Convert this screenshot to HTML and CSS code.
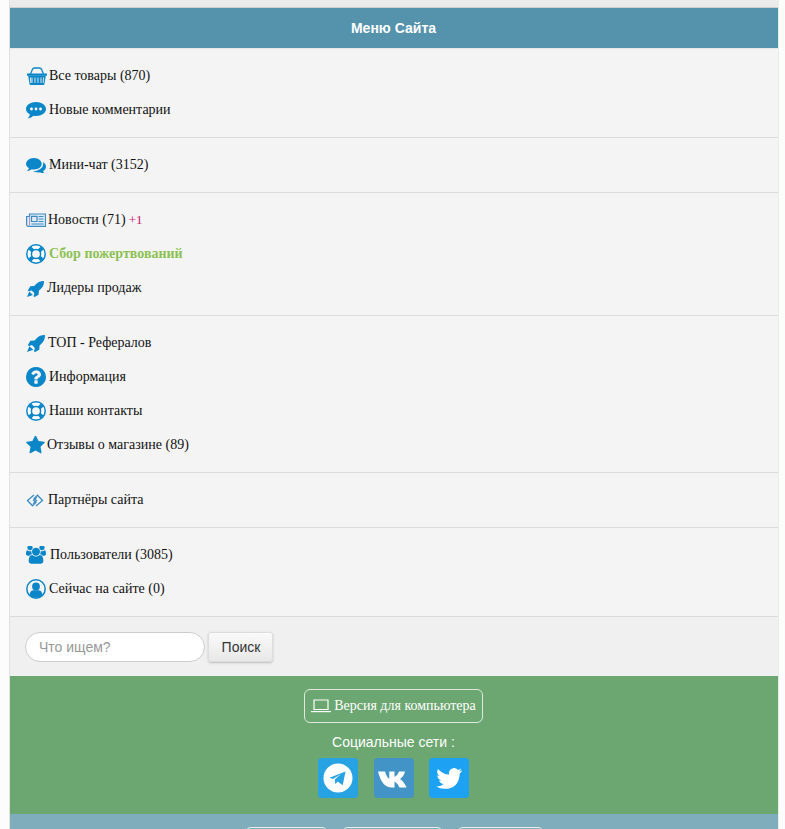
FILE: index.html
```html
<!DOCTYPE html>
<html lang="ru">
<head>
<meta charset="utf-8">
<title>Меню Сайта</title>
<link rel="stylesheet" href="styles.css">
</head>
<body>
<div class="page">
  <div class="panel">
    <div class="top-gap"></div>
    <h2 class="title">Меню Сайта</h2>
    <ul class="group">
      <li class="item"><svg class="ico i-basket" viewBox="0 0 20 18"><path d="M3.500 7 5.500 2.200Q6 1 7.500 1h5q1.500 0 2 1.200L16.500 7" fill="none" stroke="#0b86c9" stroke-width="1.300"/><path d="M0 6.500h20v2.200H0z" fill="#0b86c9"/><path d="M1.200 8.500h17.600l-1.300 8.500q-.2 1-1.200 1H3.700q-1 0-1.200-1z" fill="#0b86c9"/><path d="M5 10.500v5.500M8 10.500v5.500M11 10.500v5.500M14 10.500v5.500M16.500 10.500l-.3 5.500M3.500 10.500l.3 5.500" stroke="#f5f5f5" stroke-width=".9"/></svg><a>Все товары (870)</a></li>
      <li class="item"><svg class="ico i-comment" viewBox="0 0 20 17"><path d="M10 0c5.500 0 10 3 10 7s-4.500 7-10 7q-1.300 0-2.500-.3Q5.500 16 1.800 16.500 4 14.500 3.800 12.300 0 10.300 0 7c0-4 4.500-7 10-7z" fill="#0b86c9"/><circle cx="5.500" cy="7" r="1.400" fill="#fff"/><circle cx="10" cy="7" r="1.400" fill="#fff"/><circle cx="14.500" cy="7" r="1.400" fill="#fff"/></svg><a>Новые комментарии</a></li>
    </ul>
    <ul class="group">
      <li class="item"><svg class="ico i-comments" viewBox="0 250 1792 1340"><path d="M1408 768q0 139-94 257t-256.500 186.500-353.500 68.500q-86 0-176-16-124 88-278 128-36 9-86 16h-3q-11 0-20.500-8t-11.500-21q-1-3-1-6.500t.5-6.500 2-6l2.500-5 3.500-5.500 4-5 4.500-5 4-4.500q5-6 23-25t26-29.500 22.500-29 25-38.500 20.500-44q-124-72-195-177t-71-224q0-139 94-257t256.500-186.500 353.500-68.500 353.500 68.500 256.500 186.500 94 257zm384 256q0 120-71 224.500t-195 176.500q10 24 20.500 44t25 38.500 22.500 29 26 29.500 23 25q1 1 4 4.500t4.500 5 4 5 3.500 5.500l2.500 5 2 6 .5 6.500-1 6.500q-3 14-13 22t-22 7q-50-7-86-16-154-40-278-128-90 16-176 16-271 0-472-132 58 4 88 4 161 0 309-45t264-129q125-92 192-212t67-254q0-77-23-152 129 71 204 178t75 230z" fill="#0b86c9"/></svg><a>Мини-чат (3152)</a></li>
    </ul>
    <ul class="group">
      <li class="item"><svg class="ico i-news" viewBox="0 0 20 14"><path d="M3.500 1h16v12.300H2.200Q.6 13.300.6 11.800V3.500h2.900z" fill="#dfeaf3" stroke="#3c8cc4" stroke-width="1.200"/><path d="M3.500 3.500v9" stroke="#c58cc4" stroke-width="1"/><path d="M5.500 3.300h5.500v5.200H5.500z" fill="none" stroke="#3c8cc4" stroke-width="1.200"/><path d="M12.500 3.500h5M12.500 6h5M12.500 8.500h5M5.500 11h12" stroke="#3c8cc4" stroke-width="1.100"/></svg><a>Новости (71)</a> <span class="plus">+1</span></li>
      <li class="item"><svg class="ico i-ring" viewBox="0 0 20 20"><circle cx="10" cy="10" r="9.200" fill="#fff" stroke="#0b86c9" stroke-width="1.500"/><circle cx="10" cy="10" r="4.600" fill="#f5f5f5" stroke="#0b86c9" stroke-width="1.500"/><path d="M3.800 3.800l3 3M16.200 3.800l-3 3M3.800 16.200l3-3M16.200 16.200l-3-3" stroke="#0b86c9" stroke-width="4"/></svg><a class="bold">Сбор пожертвований</a></li>
      <li class="item"><svg class="ico i-rocket" viewBox="0 0 1728 1728"><path transform="translate(0 -32)" d="M1728 160q0 249-75.500 430.500t-253.500 360.500q-81 80-195 176l-20 379q-2 16-16 26l-384 224q-7 4-16 4-12 0-23-9l-64-64q-13-14-8-32l85-276-281-281-276 85q-3 1-9 1-14 0-23-9l-64-64q-17-19-5-39l224-384q10-14 26-16l379-20q96-114 176-195 188-187 358-258t431-71q14 0 24 9.500t10 22.500z" fill="#0b86c9"/><path d="M230 1180 600 1520 0 1728z" fill="#0b86c9"/></svg><a>Лидеры продаж</a></li>
    </ul>
    <ul class="group">
      <li class="item"><svg class="ico i-rocket2" viewBox="0 0 1728 1728"><path transform="translate(0 -32)" d="M1728 160q0 249-75.500 430.500t-253.500 360.500q-81 80-195 176l-20 379q-2 16-16 26l-384 224q-7 4-16 4-12 0-23-9l-64-64q-13-14-8-32l85-276-281-281-276 85q-3 1-9 1-14 0-23-9l-64-64q-17-19-5-39l224-384q10-14 26-16l379-20q96-114 176-195 188-187 358-258t431-71q14 0 24 9.500t10 22.500z" fill="#0b86c9"/><path d="M230 1180 600 1520 0 1728z" fill="#0b86c9"/></svg><a>ТОП - Рефералов</a></li>
      <li class="item"><svg class="ico i-question" viewBox="128 128 1536 1536"><path d="M1024 1376v-192q0-14-9-23t-23-9h-192q-14 0-23 9t-9 23v192q0 14 9 23t23 9h192q14 0 23-9t9-23zm256-672q0-88-55.500-163t-138.500-116-170-41q-243 0-371 213-15 24 8 42l132 100q7 6 19 6 16 0 25-12 53-68 86-92 34-24 86-24 48 0 85.500 26t37.500 59q0 38-20 61t-68 45q-63 28-115.500 86.500t-52.500 125.500v36q0 14 9 23t23 9h192q14 0 23-9t9-23q0-19 21.500-49.500t54.500-49.500q32-18 49-28.500t46-35 44.500-48 28-60.500 12.500-81zm384 192q0 209-103 385.500t-279.500 279.500-385.500 103-385.500-103-279.500-279.500-103-385.500 103-385.500 279.500-279.500 385.500-103 385.500 103 279.500 279.500 103 385.500z" fill="#0b86c9"/></svg><a>Информация</a></li>
      <li class="item"><svg class="ico i-ring" viewBox="0 0 20 20"><circle cx="10" cy="10" r="9.200" fill="#fff" stroke="#0b86c9" stroke-width="1.500"/><circle cx="10" cy="10" r="4.600" fill="#f5f5f5" stroke="#0b86c9" stroke-width="1.500"/><path d="M3.800 3.800l3 3M16.200 3.800l-3 3M3.800 16.200l3-3M16.200 16.200l-3-3" stroke="#0b86c9" stroke-width="4"/></svg><a>Наши контакты</a></li>
      <li class="item"><svg class="ico i-star" viewBox="0 90 1664 1590"><path d="M1728 647q0 22-26 48l-363 354 86 500q1 7 1 20 0 21-10.500 35.500t-30.500 14.500q-19 0-40-12l-449-236-449 236q-22 12-40 12-21 0-31.500-14.500t-10.500-35.500q0-6 2-20l86-500-364-354q-25-27-25-48 0-37 56-46l502-73 225-455q19-41 49-41t49 41l225 455 502 73q56 9 56 46z" transform="translate(-64 0)" fill="#0b86c9"/></svg><a>Отзывы о магазине (89)</a></li>
    </ul>
    <ul class="group">
      <li class="item"><svg class="ico i-partner" viewBox="0 0 18 13"><path d="M8 1 1.500 6.500l5 5.300 3.300-3.200-2.300-2.300 3.300-3" fill="none" stroke="#3c8cc4" stroke-width="1.300"/><path d="M10 12 16.500 6.500l-5-5.300-3.300 3.200 2.300 2.300-3.300 3" fill="none" stroke="#3c8cc4" stroke-width="1.300"/></svg><a>Партнёры сайта</a></li>
    </ul>
    <ul class="group">
      <li class="item"><svg class="ico i-users" viewBox="0 128 1920 1664"><path d="M593 896q-162 5-265 128h-134q-82 0-138-40.500t-56-118.500q0-353 124-353 6 0 43.500 21t97.500 42.500 119 21.500q67 0 133-23-5 37-5 66 0 139 81 256zm1071 637q0 120-73 189.500t-194 69.500h-874q-121 0-194-69.500t-73-189.500q0-53 3.500-103.500t14-109 26.500-108.500 43-97.500 62-81 85.500-53.500 111.500-20q10 0 43 21.500t73 48 107 48 135 21.500 135-21.500 107-48 73-48 43-21.500q61 0 111.500 20t85.500 53.500 62 81 43 97.500 26.500 108.500 14 109 3.500 103.500zm-1024-1277q0 106-75 181t-181 75-181-75-75-181 75-181 181-75 181 75 75 181zm704 384q0 159-112.500 271.500t-271.500 112.500-271.500-112.500-112.500-271.500 112.500-271.500 271.500-112.500 271.500 112.500 112.500 271.500zm576 225q0 78-56 118.500t-138 40.500h-134q-103-123-265-128 81-117 81-256 0-29-5-66 66 23 133 23 59 0 119-21.500t97.500-42.500 43.500-21q124 0 124 353zm-128-609q0 106-75 181t-181 75-181-75-75-181 75-181 181-75 181 75 75 181z" fill="#0b86c9"/></svg><a>Пользователи (3085)</a></li>
      <li class="item"><svg class="ico i-user" viewBox="0 0 20 20"><circle cx="10" cy="10" r="9.200" fill="none" stroke="#0b86c9" stroke-width="1.500"/><circle cx="10" cy="7.500" r="3.900" fill="#0b86c9"/><path d="M3.500 16q.5-4.500 4-4.700h5q3.500.2 4 4.700-6.500 5.500-13 0z" fill="#0b86c9"/></svg><a>Сейчас на сайте (0)</a></li>
    </ul>
    <form class="search">
      <input class="search-input" type="text" placeholder="Что ищем?">
      <button class="search-btn" type="button">Поиск</button>
    </form>
    <div class="green">
      <a class="desktop"><svg class="laptop" viewBox="0 0 20 14"><path d="M3 1h14v9.500H3z" fill="none" stroke="#fff" stroke-width="1.200"/><path d="M0 12h20v1.200H0z" fill="#fff"/></svg>Версия для компьютера</a>
      <div class="social-title">Социальные сети :</div>
      <div class="socials">
        <a class="soc tg"><svg viewBox="0 0 40 40"><circle cx="20" cy="20" r="14.500" fill="#fff"/><path d="M11.500 19.800 27.500 13.500l-2.800 13.700-5-3.600-2.400 2.300-.5-4.400 6.300-5.500-8.200 5z" fill="#27a2e3"/></svg></a>
        <a class="soc vk"><svg viewBox="0 0 40 40"><path d="M4 13.500h7q1.500 5.500 4.300 7.500v-7.500h5.200v5.500q3.200-1.500 4.500-5.500h6q-1.200 5-5 7.500 4 2.500 6.500 8.500h-7q-2-4.500-5-6v6h-3Q8 29.500 4 13.500z" fill="#fff"/></svg></a>
        <a class="soc tw"><svg viewBox="0 0 40 40"><path d="M33 12.500q-1.500.7-3 .9 1.700-1 2.300-2.800-1.600.9-3.300 1.300a5.200 5.200 0 0 0-8.900 4.700Q13.500 16.300 9 11q-2.300 4 1.600 7-1.200 0-2.300-.7 0 3.900 4.100 5.100-1.100.3-2.300.1 1.100 3.200 4.800 3.600-3.500 2.700-8 2.200 4 2.500 8.500 2.500 14.500 0 15.400-15.400 1.300-1 2.200-2.400z" fill="#fff"/></svg></a>
      </div>
    </div>
    <div class="blue-foot">
      <span class="pill p1"></span><span class="pill p2"></span><span class="pill p3"></span>
    </div>
  </div>
</div>
</body>
</html>
```
FILE: styles.css
```css
* { box-sizing: border-box; }
html, body { margin: 0; padding: 0; height: 829px; overflow: hidden; }
body { background: #fbfcfb; font-family: "Liberation Serif", serif; font-size: 14px; color: #111; }
.page { padding: 0 7px 0 10px; height: 829px; }
.panel { background: #f4f4f4; box-shadow: -1px 0 0 #e0e0e0, 1px 0 0 #e6efe6; height: 829px; overflow: hidden; display: flex; flex-direction: column; }
.top-gap { height: 8px; background: #ebebeb; border-bottom: 1px solid #d0d0d0; flex: none; }
.title { margin: 0; height: 41px; flex: none; background: #5592ac; border-bottom: 1px solid #e4e8e9; color: #fff; font: bold 14px/40px "Liberation Sans", sans-serif; text-align: center; padding-right: 1px; }
.group { list-style: none; margin: 0; padding: 10px 16px; border-bottom: 1px solid #dcdcdc; flex: none; }
.item { height: 34px; display: flex; align-items: center; white-space: pre; color: #111; }
.item a { color: #111; }
.item a.bold { color: #8cc152; font-weight: bold; }
.plus { color: #c2186a; font-size: 13px; margin-left: 3px; }
.ico { flex: none; display: block; }
.i-basket { width: 20px; height: 18px; margin: 0 2px 0 1px; }
.i-comment { width: 20px; height: 17px; margin: 0 3px 0 0; }
.i-comments { width: 20px; height: 15px; margin: 0 3px 0 0; }
.i-news { width: 20px; height: 14px; margin: 0 2px 0 0; }
.i-ring { width: 20px; height: 20px; margin: 0 3px 0 0; }
.i-rocket { width: 17px; height: 17px; margin: 0 3px 0 1px; }
.i-rocket2 { width: 18px; height: 18px; margin: 0 3px 0 1px; }
.i-question { width: 20px; height: 20px; margin: 0 3px 0 0; }
.i-star { width: 19px; height: 18px; margin: 0 2px 0 0; }
.i-partner { width: 18px; height: 13px; margin: 0 4px 0 0; }
.i-users { width: 20px; height: 18px; margin: 0 4px 0 0; }
.i-user { width: 20px; height: 20px; margin: 0 3px 0 0; }
.search { flex: none; height: 59px; padding: 15px 0 0 15px; display: flex; align-items: flex-start; gap: 3px; background: #f0f0f0; margin: 0; }
.search-input { width: 180px; height: 30px; border: 1px solid #ccc; border-radius: 15px; background: #fff; padding: 0 13px; font: 14px "Liberation Sans", sans-serif; outline: 0; }
.search-input::placeholder { color: #999; }
.search-btn { width: 65px; height: 30px; border: 1px solid #ddd; border-radius: 3px; background: linear-gradient(#fafafa, #e8e8e8); box-shadow: 0 1px 2px #bbb; font: 14px "Liberation Sans", sans-serif; color: #333; padding: 0 0 0 1px; }
.green { flex: none; height: 138px; background: #6ca670; padding: 13px 1px 0 0; display: flex; flex-direction: column; align-items: center; color: #fff; }
.desktop { width: 179px; height: 34px; border: 1px solid #dfe9df; border-radius: 6px; display: flex; align-items: center; justify-content: center; gap: 3px; color: #fff; font-size: 14px; }
.laptop { width: 20px; height: 14px; flex: none; }
.social-title { font: 14px/16px "Liberation Sans", sans-serif; margin-top: 11px; }
.socials { display: flex; gap: 16px; margin-top: 8px; }
.soc { width: 40px; height: 40px; border-radius: 4px; display: block; }
.soc svg { width: 40px; height: 40px; display: block; }
.tg { background: #27a2e3; }
.vk { background: #4394c6; }
.tw { background: #1da1f2; margin-left: -1px; }
.blue-foot { flex: 1; background: #80adbb; padding-top: 13px; display: flex; justify-content: center; gap: 14px; }
.pill { height: 30px; border: 1px solid #e8eef0; border-radius: 6px; display: block; background: #80adbb; }
.p1 { width: 83px; }
.p2 { width: 101px; }
.p3 { width: 87px; }
```
